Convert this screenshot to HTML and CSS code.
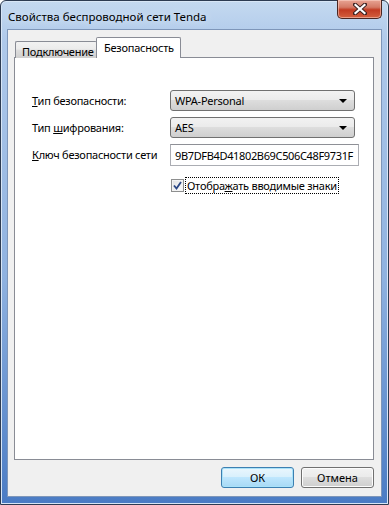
FILE: index.html
```html
<!DOCTYPE html>
<html lang="ru">

<head>
  <meta charset="UTF-8">
  <meta name="viewport" content="width=device-width, initial-scale=1.0">
  <title>Свойства беспроводной сети Tenda</title>
  <link rel="stylesheet" href="styles.css">
</head>

<body>
  <div class="window">
    <div class="titlebar">
      <span class="title">Свойства беспроводной сети Tenda</span>
      <div class="close">
        <svg width="14" height="12" viewBox="0 0 14 12">
          <path d="M2 1.5 L12 10.5 M12 1.5 L2 10.5" stroke="#3a2020" stroke-width="4" stroke-linecap="square" />
          <path d="M2.5 2 L11.5 10 M11.5 2 L2.5 10" stroke="#fff" stroke-width="2.2" stroke-linecap="square" />
        </svg>
      </div>
    </div>

    <div class="client">
      <div class="tabs">
        <div class="tab">Подключение</div>
        <div class="tab active">Безопасность</div>
      </div>

      <div class="panel">
        <div class="form">
          <label class="label"><u>Т</u>ип безопасности:</label>
          <div class="combo">
            <span>WPA-Personal</span>
            <span class="arrow"></span>
          </div>

          <label class="label">Тип <u>ш</u>ифрования:</label>
          <div class="combo">
            <span>AES</span>
            <span class="arrow"></span>
          </div>

          <label class="label"><u>К</u>люч безопасности сети</label>
          <div class="textbox">9B7DFB4D41802B69C506C48F9731F</div>

          <div class="check-row">
            <span class="checkbox">
              <svg width="9" height="9" viewBox="0 0 9 9">
                <path d="M1 4.5 L3.5 7.5 L8 1" fill="none" stroke="#2b4785" stroke-width="1.8" />
              </svg>
            </span>
            <span class="check-label">Отобра<u>ж</u>ать вводимые знаки</span>
          </div>
        </div>
      </div>

      <div class="buttons">
        <button class="btn default">ОК</button>
        <button class="btn">Отмена</button>
      </div>
    </div>
  </div>
</body>

</html>
```

FILE: styles.css
```css
* {
  box-sizing: border-box;
}

body {
  margin: 0;
  background: #fff;
  font-family: "Noto Sans", "Liberation Sans", sans-serif;
  font-size: 11px;
  letter-spacing: -0.25px;
  color: #000;
}

.window {
  width: 389px;
  height: 505px;
  display: flex;
  flex-direction: column;
  border: 1px solid #2d3b52;
  border-radius: 6px 6px 0 0;
  background: linear-gradient(180deg, #c4d9f0 0%, #afc9ea 8%, #8fb2e0 55%, #4a7bc4 100%);
  box-shadow: inset 0 0 0 1px #d8e6f6;
}

.titlebar {
  height: 28px;
  display: flex;
  justify-content: space-between;
  align-items: flex-start;
  padding-left: 7px;
}

.title {
  margin-top: 8px;
  font-size: 11.5px;
  letter-spacing: 0;
  color: #000;
  white-space: nowrap;
  text-shadow: 0 0 8px #e8f1fb;
}

.close {
  width: 45px;
  height: 19px;
  margin-right: 6px;
  margin-top: -1px;
  display: flex;
  align-items: center;
  justify-content: center;
  border: 1px solid #4a2622;
  border-top: none;
  border-radius: 0 0 5px 5px;
  background: linear-gradient(180deg, #e8a494 0%, #d47a66 40%, #c23b22 55%, #d3603f 100%);
  box-shadow: inset 0 0 0 1px rgba(255, 220, 210, .5);
}

.client {
  flex: 1;
  margin: 0 6px 7px 6px;
  border: 1px solid #7e96b9;
  background: #f0f0f0;
  display: flex;
  flex-direction: column;
  padding: 7px 7px 8px 6px;
}

.tabs {
  display: flex;
  align-items: flex-end;
  padding-left: 1px;
  height: 21px;
  margin-bottom: -1px;
  position: relative;
  z-index: 1;
}

.tab {
  height: 17px;
  width: 82px;
  padding: 2px 0 0 6px;
  border: 1px solid #898c95;
  border-bottom: none;
  border-right: none;
  border-radius: 2px 2px 0 0;
  background: linear-gradient(180deg, #f2f2f2 0%, #ebebeb 45%, #dddddd 50%, #cfcfcf 100%);
  line-height: 15px;
  white-space: nowrap;
}

.tab.active {
  height: 21px;
  width: 85px;
  margin-left: -1px;
  padding: 2px 0 0 7px;
  border-right: 1px solid #898c95;
  background: #fff;
}

.panel {
  height: 403px;
  border: 1px solid #898c95;
  background: #fff;
  padding: 32px 0 0 17px;
}

.form {
  display: grid;
  grid-template-columns: 138px 185px;
  row-gap: 6px;
  align-items: center;
}

.label {
  line-height: 16px;
  white-space: nowrap;
}

.combo {
  height: 21px;
  display: flex;
  align-items: center;
  justify-content: space-between;
  padding: 0 7px 0 4px;
  border: 1px solid #707070;
  border-radius: 3px;
  background: linear-gradient(180deg, #f2f2f2 0%, #ebebeb 45%, #dddddd 50%, #cfcfcf 100%);
}

.arrow {
  width: 0;
  height: 0;
  border-left: 4px solid transparent;
  border-right: 4px solid transparent;
  border-top: 4px solid #000;
}

.textbox {
  height: 22px;
  width: 189px;
  padding: 3px 0 0 4px;
  border: 1px solid #abadb3;
  border-top-color: #8e9096;
  background: #fff;
  white-space: nowrap;
  overflow: hidden;
  letter-spacing: -0.35px;
}

.check-row {
  grid-column: 2;
  margin-top: 6px;
  display: flex;
  align-items: center;
  gap: 2px;
  padding-left: 1px;
}

.checkbox {
  width: 13px;
  height: 13px;
  display: flex;
  align-items: center;
  justify-content: center;
  border: 1px solid #8e8f8f;
  background: linear-gradient(135deg, #e2e2e2 0%, #fdfdfd 100%);
  box-shadow: inset 0 0 0 1px #f4f4f4;
}

.check-label {
  padding: 0 1px;
  line-height: 15px;
  white-space: nowrap;
  outline: 1px dotted #000;
}

.buttons {
  margin-top: auto;
  display: flex;
  justify-content: flex-end;
  gap: 7px;
}

.btn {
  width: 73px;
  height: 21px;
  font-family: inherit;
  font-size: 11px;
  color: #000;
  padding: 0;
  border: 1px solid #707070;
  border-radius: 3px;
  background: linear-gradient(180deg, #f2f2f2 0%, #ebebeb 45%, #dddddd 50%, #cfcfcf 100%);
  box-shadow: inset 0 0 0 1px #fcfcfc;
}

.btn.default {
  border-color: #3c7fb1;
  background: linear-gradient(180deg, #eaf6fd 0%, #d9f0fc 45%, #bee6fd 50%, #a7d9f5 100%);
  box-shadow: inset 0 0 0 1px #a9e2f9;
}
```
